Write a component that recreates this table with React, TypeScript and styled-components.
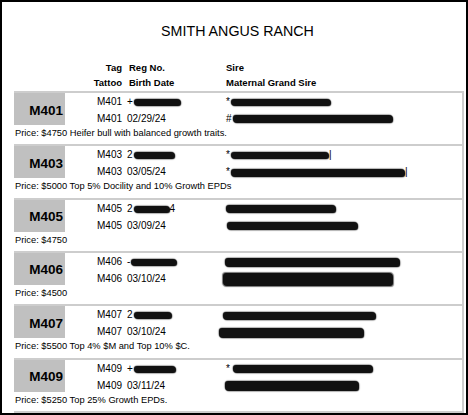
import styled, { createGlobalStyle } from "styled-components";

const GlobalStyle = createGlobalStyle`
  html, body {
    margin: 0;
    padding: 0;
    background: #fff;
  }
  body {
    font-family: "Liberation Sans", Arial, sans-serif;
    color: #000;
  }
`;

const Frame = styled.div`
  box-sizing: border-box;
  width: 468px;
  height: 415px;
  border: 2px solid #000;
  padding: 19px 2px 0 12px;
  overflow: hidden;
  background: #fff;
`;

const Title = styled.h1`
  margin: 0 0 18.5px;
  padding-right: 3px;
  height: 20px;
  line-height: 20px;
  font-size: 14.25px;
  font-weight: normal;
  text-align: center;
`;

const Columns = styled.div`
  display: grid;
  grid-template-columns: 51px 57px 104px 1fr;
`;

const HeaderGrid = styled(Columns)`
  grid-template-rows: 15px 15px;
  margin-bottom: 1.5px;
  font-size: 9.5px;
  font-weight: bold;
  line-height: 15px;
`;

const HeadCell = styled.div<{ $col: number; $align?: string; $pad?: number }>`
  grid-column: ${(p) => p.$col};
  text-align: ${(p) => p.$align ?? "left"};
  padding-left: ${(p) => p.$pad ?? 0}px;
  white-space: nowrap;
`;

const Card = styled.section`
  border-top: 2px solid #cdcdcd;
  border-right: 2px solid #cdcdcd;
  height: 51.33px;
`;

const Top = styled(Columns)`
  grid-template-rows: 17px 15px;
  font-size: 10px;
  line-height: 17px;
`;

const TagBox = styled.div`
  grid-column: 1;
  grid-row: 1 / 3;
  background: #c0c0c0;
  display: flex;
  align-items: center;
  justify-content: flex-end;
  padding: 2px 2px 0 0;
  font-size: 13.5px;
  font-weight: bold;
`;

const Cell = styled.div<{ $col: number; $row: number; $align?: string; $pad?: number }>`
  grid-column: ${(p) => p.$col};
  grid-row: ${(p) => p.$row};
  text-align: ${(p) => p.$align ?? "left"};
  padding-left: ${(p) => p.$pad ?? 0}px;
  white-space: nowrap;
`;

// redaction marks drawn over the registration / pedigree names
const Scribble = styled.span<{ $w: number; $h?: number; $shift?: number }>`
  display: inline-block;
  width: ${(p) => p.$w}px;
  height: ${(p) => p.$h ?? 7}px;
  margin-left: ${(p) => p.$shift ?? 1}px;
  vertical-align: middle;
  background: #111;
  border-radius: 3px 4px 3px 4px;
  box-shadow: 0 0 1px 0.5px rgba(0, 0, 0, 0.55);
`;

const Price = styled.div`
  font-size: 9.3px;
  line-height: 16px;
  padding-left: 1px;
  white-space: nowrap;
`;

type Blob = { pre?: string; w: number; h?: number; shift?: number; post?: string };

type Animal = {
  tag: string;
  date: string;
  reg: Blob;
  sire: Blob;
  mgs: Blob;
  price: string;
};

const animals: Animal[] = [
  {
    tag: "M401",
    date: "02/29/24",
    reg: { pre: "+", w: 47 },
    sire: { pre: "*", w: 100 },
    mgs: { pre: "#", w: 160, h: 8 },
    price: "Price: $4750 Heifer bull with balanced growth traits.",
  },
  {
    tag: "M403",
    date: "03/05/24",
    reg: { pre: "2", w: 41 },
    sire: { pre: "*", w: 98, post: "|" },
    mgs: { pre: "*", w: 174, h: 8, post: "|" },
    price: "Price: $5000 Top 5% Docility and 10% Growth EPDs",
  },
  {
    tag: "M405",
    date: "03/09/24",
    reg: { pre: "2", w: 36, post: "4" },
    sire: { w: 110, h: 8, shift: 0 },
    mgs: { w: 131, h: 8, shift: 1 },
    price: "Price: $4750",
  },
  {
    tag: "M406",
    date: "03/10/24",
    reg: { pre: "-", w: 46 },
    sire: { w: 175, h: 9, shift: -1 },
    mgs: { w: 170, h: 13, shift: -3 },
    price: "Price: $4500",
  },
  {
    tag: "M407",
    date: "03/10/24",
    reg: { pre: "2", w: 38 },
    sire: { w: 153, h: 8, shift: -3 },
    mgs: { w: 145, h: 10, shift: -7 },
    price: "Price: $5500 Top 4% $M and Top 10% $C.",
  },
  {
    tag: "M409",
    date: "03/11/24",
    reg: { pre: "+", w: 42 },
    sire: { pre: "*", w: 140, h: 8, shift: 3 },
    mgs: { w: 134, h: 10, shift: -1 },
    price: "Price: $5250 Top 25% Growth EPDs.",
  },
];

const Redacted = ({ b }: { b: Blob }) => (
  <>
    {b.pre}
    <Scribble $w={b.w} $h={b.h} $shift={b.shift} />
    {b.post}
  </>
);

const App = () => {
  return (
    <>
      <GlobalStyle />
      <Frame>
        <Title>SMITH ANGUS RANCH</Title>
        <HeaderGrid>
          <HeadCell $col={2} $align="right">Tag</HeadCell>
          <HeadCell $col={3} $pad={7}>Reg No.</HeadCell>
          <HeadCell $col={4}>Sire</HeadCell>
          <HeadCell $col={2} $align="right">Tattoo</HeadCell>
          <HeadCell $col={3} $pad={7}>Birth Date</HeadCell>
          <HeadCell $col={4}>Maternal Grand Sire</HeadCell>
        </HeaderGrid>
        {animals.map((a) => (
          <Card key={a.tag}>
            <Top>
              <TagBox>{a.tag}</TagBox>
              <Cell $col={2} $row={1} $align="right">{a.tag}</Cell>
              <Cell $col={3} $row={1} $pad={5}>
                <Redacted b={a.reg} />
              </Cell>
              <Cell $col={4} $row={1}>
                <Redacted b={a.sire} />
              </Cell>
              <Cell $col={2} $row={2} $align="right">{a.tag}</Cell>
              <Cell $col={3} $row={2} $pad={5}>{a.date}</Cell>
              <Cell $col={4} $row={2}>
                <Redacted b={a.mgs} />
              </Cell>
            </Top>
            <Price>{a.price}</Price>
          </Card>
        ))}
        <Card>
          <Top>
            <TagBox />
          </Top>
        </Card>
      </Frame>
    </>
  );
};

export default App;
